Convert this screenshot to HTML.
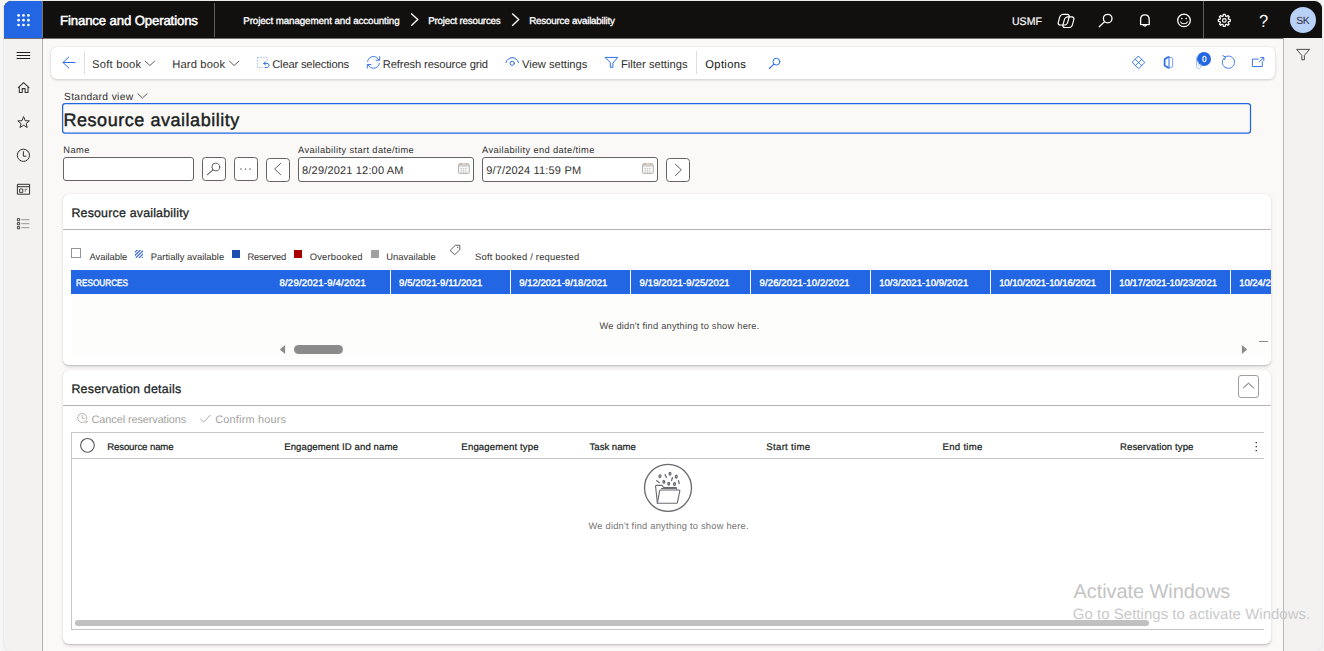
<!DOCTYPE html>
<html>
<head>
<meta charset="utf-8">
<title>Resource availability</title>
<style>
html,body{margin:0;padding:0;}
body{width:1324px;height:651px;overflow:hidden;background:#f6f6f6;font-family:"Liberation Sans",sans-serif;position:relative;}
.abs,.t,svg{position:absolute;}
.t{white-space:pre;display:block;text-rendering:geometricPrecision;}
svg{overflow:visible;}
#frame{left:4px;top:1px;width:1318px;height:650px;border-radius:7.5px 7.5px 7px 7px;overflow:hidden;background:#faf9f8;box-shadow:0 0 1.6px rgba(0,0,0,.22);}
#hdr{left:0;top:0;width:1318px;height:37px;background:#11100f;}
#hdrb{left:0;top:37px;width:1318px;height:1px;background:rgba(6,6,6,.55);}
#waffle{left:0;top:0;width:38px;height:37.5px;background:#2266e3;}
#side{left:0;top:37px;width:38px;height:613px;background:#f3f2f1;border-right:1px solid #b3b0ad;}
#sideb{left:38px;top:0;width:1px;height:37.5px;background:#7a7673;}
#rpane{left:1279px;top:37px;width:39px;height:613px;background:#f3f2f1;border-left:1px solid #bab8b6;}
#abar{left:51.2px;top:47.2px;width:1223.8px;height:31.6px;background:#fff;border-radius:6px;box-shadow:0 1px 3px rgba(0,0,0,.16),0 0 2px rgba(0,0,0,.08);}
.vline{width:1px;background:#e1dfdd;}
#title{left:62px;top:103px;width:1186.5px;height:28px;border:1.4px solid #2266e3;border-radius:3px;background:#faf9f8;}
.inp{border:1px solid #666462;border-radius:3px;background:#fff;}
.btn{width:21.8px;height:22px;border:1px solid #666462;border-radius:3.5px;background:#fff;}
.card{background:#fff;border-radius:6px;box-shadow:0 1.4px 3.2px rgba(0,0,0,.13),0 0.3px 1px rgba(0,0,0,.11);}
.hline{height:1px;background:#b7b4b1;}
.gh{top:270px;height:23.8px;background:#2266e3;}
.gd{top:270px;height:24px;width:1px;background:#fff;}
</style>
</head>
<body>
<div id="frame" class="abs">
 <div id="hdr" class="abs"></div>
 <div id="waffle" class="abs"></div>
 <div id="side" class="abs"></div>
 <div id="sideb" class="abs"></div>
 <div id="hdrb" class="abs"></div>
 <div id="rpane" class="abs"></div>
</div>

<!-- header dividers -->
<div class="abs" style="left:214px;top:3px;width:1px;height:34px;background:#605e5c"></div>
<div class="abs" style="left:1203px;top:1px;width:1px;height:37px;background:#605e5c"></div>
<!-- avatar -->
<div class="abs" style="left:1290px;top:7px;width:26px;height:26px;border-radius:50%;background:#b9d0f7"></div>

<!-- action bar -->
<div id="abar" class="abs"></div>
<div class="abs vline" style="left:84px;top:51px;height:23px"></div>
<div class="abs vline" style="left:695.5px;top:51px;height:23px"></div>
<!-- badge -->
<div class="abs" style="left:1196.95px;top:51.75px;width:14.1px;height:14.1px;border-radius:50%;background:#2266e3"></div>

<!-- title -->
<svg style="left:0;top:0" width="1324" height="140" viewBox="0 0 1324 140"><rect x="62.6" y="103.5" width="1187.9" height="29.7" rx="2.6" fill="#faf9f8" stroke="#2266e3" stroke-width="1.25"/></svg>

<!-- filter row -->
<div class="abs inp" style="left:63.2px;top:157.2px;width:128.6px;height:21.6px"></div>
<div class="abs btn" style="left:202px;top:157px"></div>
<div class="abs btn" style="left:234.1px;top:157px"></div>
<div class="abs btn" style="left:266.1px;top:158px"></div>
<div class="abs inp" style="left:298.1px;top:157.2px;width:173.5px;height:22.8px"></div>
<div class="abs inp" style="left:482.1px;top:157.2px;width:173.9px;height:22.8px"></div>
<div class="abs btn" style="left:666.2px;top:158px"></div>

<!-- card 1 -->
<div class="abs card" style="left:63px;top:194px;width:1208.2px;height:171px;overflow:hidden">
  <div class="abs hline" style="left:0;top:35px;width:1209px"></div>
  <div class="abs" style="left:8px;top:100px;width:1198.7px;height:62.8px;background:#fdfdfc"></div>
</div>
<div class="abs gh" style="left:71px;width:1200px"></div>
<div class="abs gd" style="left:390px"></div>
<div class="abs gd" style="left:510px"></div>
<div class="abs gd" style="left:630px"></div>
<div class="abs gd" style="left:750px"></div>
<div class="abs gd" style="left:870px"></div>
<div class="abs gd" style="left:990px"></div>
<div class="abs gd" style="left:1110px"></div>
<div class="abs gd" style="left:1230px"></div>
<!-- legend swatches -->
<div class="abs" style="left:71px;top:248px;width:8px;height:8px;border:1px solid #979593;background:#fff;box-sizing:content-box"></div>
<svg style="left:134.9px;top:250.2px;overflow:hidden" width="8" height="7.8" viewBox="0 0 8 7.8"><g stroke="#2f62d6" stroke-width="1.15"><path d="M-1 3.2L3.2 -1M-1 6.4L6.4 -1M0.8 7.8L8 0.6M4 8L9 3M7.2 8L9 6.2"/></g></svg>
<div class="abs" style="left:232.2px;top:250.2px;width:7.8px;height:7.8px;background:#1e4fb0"></div>
<div class="abs" style="left:294.3px;top:250.2px;width:7.8px;height:7.8px;background:#a80000"></div>
<div class="abs" style="left:371.3px;top:250.2px;width:7.8px;height:7.8px;background:#a0a0a0"></div>
<!-- grid1 scrollbar -->
<svg style="left:279px;top:344px" width="10" height="11" viewBox="279 344 10 11"><path d="M285.1 344.9V353.9L279.8 349.4Z" fill="#8b8b8b"/></svg>
<div class="abs" style="left:293.9px;top:344.9px;width:49.1px;height:9px;border-radius:4.5px;background:#8b8b8b"></div>
<svg style="left:1240px;top:344px" width="10" height="11" viewBox="1240 344 10 11"><path d="M1241.9 344.9V353.9L1247.2 349.4Z" fill="#8b8b8b"/></svg>
<div class="abs" style="left:1259px;top:341px;width:8.8px;height:1px;background:#8a8886"></div>

<!-- card 2 -->
<div class="abs card" style="left:63px;top:370px;width:1208.2px;height:274px;overflow:hidden">
  <div class="abs hline" style="left:0;top:35px;width:1209px"></div>
</div>
<div class="abs" style="left:1238.1px;top:375.2px;width:18.8px;height:21.3px;border:1px solid #a19f9d;border-radius:3px;background:#fff"></div>
<div class="abs" style="left:71px;top:432px;width:1192px;height:196.3px;border:1px solid #c8c6c4;border-right:none;box-sizing:content-box"></div>
<div class="abs" style="left:72px;top:458px;width:1192px;height:1px;background:#c8c6c4"></div>
<svg style="left:78px;top:436px" width="20" height="20" viewBox="78 436 20 20"><circle cx="87.45" cy="445.35" r="6.85" fill="#fff" stroke="#5c5a58" stroke-width="1.15"/></svg>
<div class="abs" style="left:75px;top:620px;width:1073.5px;height:6.2px;border-radius:3.1px;background:#c1c1c1"></div>

<!-- waffle -->
<svg style="left:16px;top:13px" width="16" height="16" viewBox="16 13 16 16"><g fill="#fff">
<circle cx="18.6" cy="15.4" r="1.35"/><circle cx="23.5" cy="15.4" r="1.35"/><circle cx="28.4" cy="15.4" r="1.35"/>
<circle cx="18.6" cy="20.2" r="1.35"/><circle cx="23.5" cy="20.2" r="1.35"/><circle cx="28.4" cy="20.2" r="1.35"/>
<circle cx="18.6" cy="25" r="1.35"/><circle cx="23.5" cy="25" r="1.35"/><circle cx="28.4" cy="25" r="1.35"/></g></svg>
<!-- sidebar icons -->
<svg style="left:0;top:0" width="44" height="240" viewBox="0 0 44 240" fill="none" stroke="#323130" stroke-width="1">
<path d="M16.6 52.5H30.2M16.6 55.5H30.2M16.6 58.5H30.2" stroke="#201f1e" stroke-width="1.05"/>
<path d="M18 87.8L23.6 82.6L29.3 87.8M19.3 86.8V92.4H22.2V88.6H25.1V92.4H28V86.8" stroke-width="1.05" stroke-linejoin="round"/>
<path d="M23.6 116.6L25.2 120.7L29.4 120.9L26.1 123.6L27.2 127.5L23.6 125.2L20 127.5L21.1 123.6L17.8 120.9L22 120.7Z" stroke-width="1" stroke-linejoin="miter"/>
<circle cx="23.4" cy="155.3" r="6.1" stroke-width="1"/><path d="M23.4 151.2V156.2H26.3" stroke-width="1"/>
<path d="M17.4 184.3H29.6V194.2H17.4ZM17.4 186.7H29.6" stroke-width="1"/><path d="M19.6 189H22.8V192.4H19.6Z" stroke-width="0.9"/><path d="M24.6 189.3H27.4M24.6 191H26" stroke-width="0.9" stroke="#605e5c"/>
<path d="M17.4 218.6H19.6V220.8H17.4ZM17.4 222.6H19.6V224.8H17.4ZM17.4 226.6H19.6V228.8H17.4Z" stroke-width="0.9"/><path d="M21.4 219.7H29.4M21.4 223.7H29.4M21.4 227.7H29.4" stroke="#8a8886" stroke-width="0.9"/>
</svg>
<!-- breadcrumb chevrons -->
<svg style="left:0;top:0" width="700" height="40" viewBox="0 0 700 40" fill="none" stroke="#fff" stroke-width="1.4">
<path d="M411.2 13.5L417.7 19.6L411.2 25.7"/><path d="M512.2 13.5L518.7 19.6L512.2 25.7"/></svg>
<!-- header right icons -->
<svg style="left:1050px;top:0" width="200" height="40" viewBox="1050 0 200 40" fill="none" stroke="#fff" stroke-width="1.3" stroke-linecap="round" stroke-linejoin="round">
<!-- copilot -->
<rect x="-4.7" y="-5.3" width="9.4" height="10.6" rx="2.6" transform="translate(1063.7 19.7) skewX(-15)" stroke-width="1.2"/>
<rect x="-4.7" y="-5.3" width="9.4" height="10.6" rx="2.6" transform="translate(1068.4 22.2) skewX(-15)" stroke-width="1.2"/>
<!-- search -->
<circle cx="1107.7" cy="18.6" r="4.3"/><path d="M1104.5 21.8L1099.2 26.8"/>
<!-- bell -->
<path d="M1140.6 24.6V19.6C1140.6 16.6 1142.4 14.8 1144.9 14.8C1147.400 14.8 1149.200 16.600 1149.200 19.600V24.600H1140.600Z"/><path d="M1143.6 25.2C1143.9 26.300 1145.900 26.300 1146.200 25.200" stroke-width="1.3"/>
<!-- smiley -->
<circle cx="1184" cy="20.4" r="6.3"/><circle cx="1181.800" cy="18.6" r="0.8" fill="#fff" stroke="none"/><circle cx="1186.200" cy="18.6" r="0.8" fill="#fff" stroke="none"/><path d="M1180.600 21.900C1181.600 24.400 1186.400 24.400 1187.400 21.900" stroke-width="1.1"/>
<!-- gear -->
<g transform="translate(1224.300 20.400) scale(0.9)"><circle r="2" stroke-width="1.35"/><path d="M-1.050 -6.600H1.050L1.400 -4.750L2.450 -4.300L4 -5.400L5.400 -4L4.300 -2.450L4.750 -1.400L6.600 -1.050V1.050L4.750 1.400L4.300 2.450L5.400 4L4 5.400L2.450 4.300L1.400 4.750L1.050 6.600H-1.050L-1.400 4.750L-2.450 4.300L-4 5.400L-5.400 4L-4.300 2.450L-4.750 1.400L-6.600 1.050V-1.050L-4.750 -1.400L-4.300 -2.450L-5.400 -4L-4 -5.400L-2.450 -4.300L-1.400 -4.750Z" stroke-width="1.4"/></g>
</svg>
<!-- right pane filter -->
<svg style="left:1290px;top:44px" width="26" height="22" viewBox="1290 44 26 22" fill="none" stroke="#3b3a39" stroke-width="0.9" stroke-linejoin="round"><path d="M1296.600 49.400H1309.600L1304.400 55.400V59.800H1301.800V55.400Z"/></svg>
<!-- action bar icons -->
<svg style="left:50px;top:46px" width="760" height="34" viewBox="50 46 760 34" fill="none" stroke="#2d6de5" stroke-width="0.92" stroke-linecap="round" stroke-linejoin="round">
<path d="M75.200 62.500H63M68.800 57L63 62.500L68.800 68" stroke-width="1"/>
<path d="M145.200 61.200L149.900 65.500L154.600 61.200" stroke="#605e5c" stroke-width="1"/>
<path d="M229.400 61.200L234.100 65.500L238.800 61.200" stroke="#605e5c" stroke-width="1"/>
<!-- clear selections -->
<path d="M257.400 57.300H267.200V61.500M257.400 57.300V67.500H262.500" stroke="#9db9f2" stroke-width="0.95" stroke-dasharray="1.6 1.3" stroke-linecap="butt"/>
<path d="M263.900 63.400H267C268.400 63.400 269 64.300 269 65.300C269 66.600 268 67.500 266.600 67.500H265.200M265.500 61.800L263.900 63.400L265.500 65" stroke-width="1"/>
<!-- refresh sync -->
<path d="M367.600 61.400C368 58.600 370.400 56.500 373.400 56.500C375.900 56.500 377.900 57.900 378.900 59.900M379.700 56.600V60.200H376.100"/>
<path d="M379.400 63.300C379 66.100 376.600 68.200 373.600 68.200C371.100 68.200 369.100 66.800 368.100 64.800M367.300 68.100V64.500H370.900"/>
<!-- eye -->
<path d="M505.900 62.600C506.900 59.500 509.400 57.700 512.200 57.700C515 57.700 517.500 59.500 518.500 62.600" stroke-width="1"/><circle cx="512.200" cy="63.300" r="2.100" stroke-width="1"/>
<!-- funnel -->
<path d="M605.500 57.400H617.700L612.900 63V67.300H610.300V63Z" stroke-width="1"/>
<!-- search -->
<circle cx="776.400" cy="61.700" r="3.400" stroke-width="1"/><path d="M773.900 64.200L769.400 68.500" stroke-width="1.1"/>
</svg>
<svg style="left:1125px;top:46px" width="150" height="34" viewBox="1125 46 150 34" fill="none" stroke="#2d6de5" stroke-width="0.92" stroke-linecap="round" stroke-linejoin="round">
<!-- diamond -->
<path d="M1138.600 56.300L1144.800 62.500L1138.600 68.700L1132.400 62.500Z"/><path d="M1135.500 59.400L1141.700 65.600M1141.700 59.400L1135.500 65.600" stroke-width="0.9"/>
<!-- office -->
<path d="M1168.7 56.7L1164.6 59.2V65.6L1168.7 68.1" stroke-width="1.7" stroke-linejoin="miter" stroke-linecap="butt"/>
<path d="M1169 56.4V68.4" stroke-width="1"/>
<path d="M1169.3 57.6H1171.6Q1172.7 57.6 1172.7 58.700V66.200Q1172.7 67.300 1171.600 67.300H1169.300" stroke-width="0.85" stroke="#5f8feb"/>
<!-- clip -->
<path d="M1196.500 57V66.600C1196.500 67.800 1197.500 68.500 1198.700 68.500C1199.900 68.500 1200.900 67.800 1200.900 66.600V64" stroke="#9db9f2" stroke-width="0.9"/>
<path d="M1198.300 62V66" stroke="#b9cdf6" stroke-width="0.8"/>
<!-- refresh -->
<path d="M1225.100 57C1226.100 56.400 1227.200 56.100 1228.400 56.100C1231.800 56.100 1234.500 58.800 1234.500 62.200C1234.500 65.600 1231.800 68.300 1228.400 68.300C1225 68.300 1222.300 65.600 1222.300 62.200C1222.300 60.800 1222.800 59.500 1223.500 58.500"/><path d="M1222.900 55.700L1225.600 57L1224.400 59.600" stroke-width="0.95"/>
<!-- popout -->
<path d="M1258.300 59.100H1252.400V66.500H1262.300V61.800"/><path d="M1259.300 61.800L1263.700 57.700M1260.600 57.600H1263.800V60.800"/>
</svg>
<!-- std view chevron -->
<svg style="left:136px;top:90px" width="14" height="12" viewBox="136 90 14 12" fill="none" stroke="#605e5c" stroke-width="1" stroke-linecap="round" stroke-linejoin="round"><path d="M137.900 93.700L142.500 98L147.100 93.700"/></svg>
<!-- filter row icons -->
<svg style="left:196px;top:152px" width="500" height="36" viewBox="196 152 500 36" fill="none" stroke="#605e5c" stroke-width="1" stroke-linecap="round" stroke-linejoin="round">
<circle cx="215.800" cy="167" r="3.900"/><path d="M212.900 169.800L207.500 174.600" stroke-width="1.1"/>
<g fill="#605e5c" stroke="none"><rect x="240.300" y="168.400" width="1.300" height="1.300"/><rect x="244.850" y="168.400" width="1.300" height="1.300"/><rect x="249.400" y="168.400" width="1.300" height="1.300"/></g>
<path d="M280.600 163.400L274.600 169L280.600 174.700"/>
<path d="M675.400 164.300L681.400 169.900L675.400 175.600"/>
<!-- calendars -->
<g stroke="#a3a19f" stroke-width="0.9"><rect x="458.6" y="164" width="10.6" height="9.3" rx="0.9" fill="#fff"/><path d="M459.05 165.6H468.75" stroke-width="2.2" stroke="#d0cecc" stroke-linecap="butt"/><path d="M461.1 163.1V164.7M466.7 163.1V164.7" stroke="#c9a777" stroke-width="1.1" stroke-linecap="butt"/><path d="M460.6 168.4H467.2M460.6 170.2H467.2M460.6 172H467.2" stroke="#b1afad" stroke-width="0.9" stroke-dasharray="1.4 0.9" stroke-linecap="butt"/></g>
<g stroke="#a3a19f" stroke-width="0.9"><rect x="642.6" y="164" width="10.6" height="9.3" rx="0.9" fill="#fff"/><path d="M643.05 165.6H652.75" stroke-width="2.2" stroke="#d0cecc" stroke-linecap="butt"/><path d="M645.1 163.1V164.7M650.7 163.1V164.7" stroke="#c9a777" stroke-width="1.1" stroke-linecap="butt"/><path d="M644.6 168.4H651.2M644.6 170.2H651.2M644.6 172H651.2" stroke="#b1afad" stroke-width="0.9" stroke-dasharray="1.4 0.9" stroke-linecap="butt"/></g>
</svg>
<!-- tag -->
<svg style="left:446px;top:242px" width="18" height="16" viewBox="446 242 18 16" fill="none" stroke="#484644" stroke-width="0.85" stroke-linejoin="round"><path d="M455.400 245.300H459.800V249.800L454.600 254.700L450.100 250.500Z"/><circle cx="457.700" cy="247.400" r="0.550" fill="#484644" stroke="none"/></svg>
<!-- collapse chevron -->
<svg style="left:1238px;top:376px" width="22" height="22" viewBox="1238 376 22 22" fill="none" stroke="#484644" stroke-width="0.9" stroke-linecap="round" stroke-linejoin="round"><path d="M1243.500 387.800L1248.500 383.200L1253.500 387.800"/></svg>
<!-- cancel + check -->
<svg style="left:74px;top:408px" width="150" height="22" viewBox="74 408 150 22" fill="none" stroke="#b3b0ad" stroke-width="0.95" stroke-linecap="round" stroke-linejoin="round">
<path d="M83.600 422.300C83.200 422.400 82.700 422.500 82.200 422.500C79.700 422.500 77.700 420.500 77.700 418C77.700 415.500 79.700 413.500 82.200 413.500C84.700 413.500 86.700 415.500 86.700 418C86.700 418.500 86.600 418.900 86.500 419.300"/><path d="M82.200 415.400V418.300H84.300"/><path d="M84.400 421.800H87.200M86.100 420.600L87.300 421.800L86.100 423"/>
<path d="M200.600 419.100L203.600 422L210.300 415.300" stroke="#a19f9d"/>
</svg>
<!-- more (vertical dots) -->
<svg style="left:1252px;top:438px" width="10" height="18" viewBox="1252 438 10 18"><g fill="#323130"><rect x="1255.600" y="442" width="1.300" height="1.300"/><rect x="1255.600" y="446" width="1.300" height="1.300"/><rect x="1255.600" y="450" width="1.300" height="1.300"/></g></svg>
<!-- empty state icon -->
<svg style="left:640px;top:460px" width="56" height="56" viewBox="640 460 56 56" fill="none" stroke="#6b6970" stroke-width="1.15" stroke-linecap="round" stroke-linejoin="round">
<circle cx="668" cy="487.800" r="23.500" stroke-width="1.300"/>
<path d="M657.400 503.200L655.600 486.500C655.500 485.800 655.900 485.400 656.600 485.400H662L663.600 487.500H676.300V490"/>
<path d="M657.400 503.200L659.600 490.800C659.700 490.300 660 490 660.500 490H679C679.600 490 679.900 490.400 679.800 491L677.500 502.400C677.400 502.900 677 503.200 676.500 503.200Z" fill="#fff"/>
<path d="M661.500 488.500H675.500" stroke-width="1.200" stroke-dasharray="1.200 0.900"/>
<g stroke-width="1.300">
<ellipse cx="660" cy="476.200" rx="0.900" ry="1.300" transform="rotate(25 660 476.200)"/>
<path d="M665.100 474.700L666.400 477.400"/>
<ellipse cx="670" cy="473.700" rx="0.900" ry="1.400"/>
<ellipse cx="676.300" cy="476.600" rx="0.900" ry="1.400" transform="rotate(20 676.300 476.600)"/>
<path d="M672.400 477.700L671.500 480.600"/>
<path d="M656.700 480.700L659.200 482.600"/>
<ellipse cx="663.800" cy="481.800" rx="0.900" ry="1.300" transform="rotate(-15 663.800 481.800)"/>
<ellipse cx="668.700" cy="483.800" rx="0.900" ry="1.300"/>
<ellipse cx="674.500" cy="484" rx="0.900" ry="1.300" transform="rotate(15 674.500 484)"/>
<path d="M678.400 480.700L679.300 483.500"/>
</g>
</svg>


<span class="t" style="left:60.04px;top:12.51px;font-size:13.2px;line-height:15.84px;font-weight:400;color:#ffffff;letter-spacing:-0.136px;-webkit-text-stroke:0.5px #ffffff;">Finance and Operations</span>
<span class="t" style="left:243.22px;top:15.72px;font-size:9.8px;line-height:11.76px;font-weight:400;color:#ffffff;letter-spacing:-0.099px;-webkit-text-stroke:0.32px #ffffff;">Project management and accounting</span>
<span class="t" style="left:428.22px;top:15.72px;font-size:9.8px;line-height:11.76px;font-weight:400;color:#ffffff;letter-spacing:-0.236px;-webkit-text-stroke:0.32px #ffffff;">Project resources</span>
<span class="t" style="left:529.22px;top:15.72px;font-size:9.8px;line-height:11.76px;font-weight:400;color:#ffffff;letter-spacing:-0.208px;-webkit-text-stroke:0.32px #ffffff;">Resource availability</span>
<span class="t" style="left:1012.31px;top:16.49px;font-size:11.1px;line-height:13.32px;font-weight:400;color:#ffffff;transform:scaleX(0.9499);transform-origin:0 0;-webkit-text-stroke:0.2px #ffffff;">USMF</span>
<span class="t" style="left:1258.81px;top:11.34px;font-size:17.6px;line-height:21.12px;font-weight:400;color:#ffffff;transform:scaleX(0.9363);transform-origin:0 0;">?</span>
<span class="t" style="left:1296.15px;top:16.16px;font-size:10.4px;line-height:12.48px;font-weight:400;color:#2b2b40;letter-spacing:-0.264px;">SK</span>
<span class="t" style="left:92.07px;top:59.40px;font-size:11.2px;line-height:13.44px;font-weight:400;color:#323130;letter-spacing:0.224px;">Soft book</span>
<span class="t" style="left:172.16px;top:59.40px;font-size:11.2px;line-height:13.44px;font-weight:400;color:#323130;letter-spacing:0.157px;">Hard book</span>
<span class="t" style="left:272.22px;top:59.40px;font-size:11.2px;line-height:13.44px;font-weight:400;color:#323130;letter-spacing:-0.183px;">Clear selections</span>
<span class="t" style="left:382.74px;top:59.40px;font-size:11.2px;line-height:13.44px;font-weight:400;color:#323130;letter-spacing:-0.114px;">Refresh resource grid</span>
<span class="t" style="left:521.98px;top:59.40px;font-size:11.2px;line-height:13.44px;font-weight:400;color:#323130;letter-spacing:-0.028px;">View settings</span>
<span class="t" style="left:620.92px;top:59.40px;font-size:11.2px;line-height:13.44px;font-weight:400;color:#323130;letter-spacing:0.005px;">Filter settings</span>
<span class="t" style="left:705.30px;top:59.40px;font-size:11.2px;line-height:13.44px;font-weight:400;color:#201f1e;letter-spacing:0.332px;-webkit-text-stroke:0.08px #201f1e;">Options</span>
<span class="t" style="left:1202.01px;top:53.77px;font-size:8.7px;line-height:10.44px;font-weight:400;color:#ffffff;transform:scaleX(0.9284);transform-origin:0 0;-webkit-text-stroke:0.25px #ffffff;">0</span>
<span class="t" style="left:63.96px;top:92.25px;font-size:10.3px;line-height:12.36px;font-weight:400;color:#323130;letter-spacing:0.336px;">Standard view</span>
<span class="t" style="left:63.51px;top:109.96px;font-size:18.0px;line-height:21.6px;font-weight:400;color:#201f1e;letter-spacing:0.538px;-webkit-text-stroke:0.45px #201f1e;">Resource availability</span>
<span class="t" style="left:63.27px;top:145.20px;font-size:9.3px;line-height:11.16px;font-weight:400;color:#323130;letter-spacing:0.417px;">Name</span>
<span class="t" style="left:298.09px;top:145.20px;font-size:9.3px;line-height:11.16px;font-weight:400;color:#323130;letter-spacing:0.384px;">Availability start date/time</span>
<span class="t" style="left:482.12px;top:145.20px;font-size:9.3px;line-height:11.16px;font-weight:400;color:#323130;letter-spacing:0.381px;">Availability end date/time</span>
<span class="t" style="left:302.09px;top:164.59px;font-size:11.0px;line-height:13.2px;font-weight:400;color:#323130;letter-spacing:0.173px;">8/29/2021 12:00 AM</span>
<span class="t" style="left:486.21px;top:164.59px;font-size:11.0px;line-height:13.2px;font-weight:400;color:#323130;letter-spacing:0.169px;">9/7/2024 11:59 PM</span>
<span class="t" style="left:71.40px;top:206.26px;font-size:12.4px;line-height:14.88px;font-weight:400;color:#201f1e;letter-spacing:0.198px;-webkit-text-stroke:0.28px #201f1e;">Resource availability</span>
<span class="t" style="left:89.52px;top:251.10px;font-size:9.4px;line-height:11.28px;font-weight:400;color:#323130;letter-spacing:-0.017px;">Available</span>
<span class="t" style="left:150.84px;top:251.10px;font-size:9.4px;line-height:11.28px;font-weight:400;color:#323130;letter-spacing:0.021px;">Partially available</span>
<span class="t" style="left:247.50px;top:251.10px;font-size:9.4px;line-height:11.28px;font-weight:400;color:#323130;letter-spacing:-0.200px;">Reserved</span>
<span class="t" style="left:309.69px;top:251.10px;font-size:9.4px;line-height:11.28px;font-weight:400;color:#323130;letter-spacing:0.202px;">Overbooked</span>
<span class="t" style="left:386.13px;top:251.10px;font-size:9.4px;line-height:11.28px;font-weight:400;color:#323130;letter-spacing:0.056px;">Unavailable</span>
<span class="t" style="left:475.07px;top:251.10px;font-size:9.4px;line-height:11.28px;font-weight:400;color:#323130;letter-spacing:0.206px;">Soft booked / requested</span>
<span class="t" style="left:75.54px;top:277.10px;font-size:9.4px;line-height:11.28px;font-weight:400;color:#ffffff;transform:scaleX(0.8770);transform-origin:0 0;-webkit-text-stroke:0.4px #ffffff;">RESOURCES</span>
<span class="t" style="left:279.49px;top:278.01px;font-size:9.5px;line-height:11.4px;font-weight:400;color:#ffffff;letter-spacing:0.229px;-webkit-text-stroke:0.4px #ffffff;">8/29/2021-9/4/2021</span>
<span class="t" style="left:399.06px;top:278.01px;font-size:9.5px;line-height:11.4px;font-weight:400;color:#ffffff;letter-spacing:0.095px;-webkit-text-stroke:0.4px #ffffff;">9/5/2021-9/11/2021</span>
<span class="t" style="left:519.26px;top:278.01px;font-size:9.5px;line-height:11.4px;font-weight:400;color:#ffffff;letter-spacing:0.018px;-webkit-text-stroke:0.4px #ffffff;">9/12/2021-9/18/2021</span>
<span class="t" style="left:639.52px;top:278.01px;font-size:9.5px;line-height:11.4px;font-weight:400;color:#ffffff;letter-spacing:0.136px;-webkit-text-stroke:0.4px #ffffff;">9/19/2021-9/25/2021</span>
<span class="t" style="left:759.52px;top:278.01px;font-size:9.5px;line-height:11.4px;font-weight:400;color:#ffffff;letter-spacing:0.136px;-webkit-text-stroke:0.4px #ffffff;">9/26/2021-10/2/2021</span>
<span class="t" style="left:879.13px;top:278.01px;font-size:9.5px;line-height:11.4px;font-weight:400;color:#ffffff;letter-spacing:0.075px;-webkit-text-stroke:0.4px #ffffff;">10/3/2021-10/9/2021</span>
<span class="t" style="left:999.13px;top:278.01px;font-size:9.5px;line-height:11.4px;font-weight:400;color:#ffffff;letter-spacing:-0.063px;-webkit-text-stroke:0.4px #ffffff;">10/10/2021-10/16/2021</span>
<span class="t" style="left:1119.13px;top:278.01px;font-size:9.5px;line-height:11.4px;font-weight:400;color:#ffffff;letter-spacing:-0.023px;-webkit-text-stroke:0.4px #ffffff;">10/17/2021-10/23/2021</span>
<div class="abs" style="left:0;top:0;width:1271.2px;height:300px;overflow:hidden"><span class="t" style="left:1239.13px;top:278.01px;font-size:9.5px;line-height:11.4px;font-weight:400;color:#ffffff;letter-spacing:-0.023px;-webkit-text-stroke:0.4px #ffffff;">10/24/2021-10/30/2021</span></div>
<span class="t" style="left:599.38px;top:321.20px;font-size:9.3px;line-height:11.16px;font-weight:400;color:#484644;letter-spacing:0.221px;">We didn't find anything to show here.</span>
<span class="t" style="left:71.40px;top:382.26px;font-size:12.4px;line-height:14.88px;font-weight:400;color:#201f1e;letter-spacing:0.242px;-webkit-text-stroke:0.28px #201f1e;">Reservation details</span>
<span class="t" style="left:91.60px;top:413.68px;font-size:10.9px;line-height:13.08px;font-weight:400;color:#a19f9d;letter-spacing:-0.088px;">Cancel reservations</span>
<span class="t" style="left:215.20px;top:413.68px;font-size:10.9px;line-height:13.08px;font-weight:400;color:#a19f9d;letter-spacing:0.207px;">Confirm hours</span>
<span class="t" style="left:107.16px;top:441.91px;font-size:9.6px;line-height:11.52px;font-weight:400;color:#201f1e;letter-spacing:-0.108px;-webkit-text-stroke:0.22px #201f1e;">Resource name</span>
<span class="t" style="left:284.17px;top:441.91px;font-size:9.6px;line-height:11.52px;font-weight:400;color:#201f1e;letter-spacing:0.080px;-webkit-text-stroke:0.22px #201f1e;">Engagement ID and name</span>
<span class="t" style="left:461.36px;top:441.91px;font-size:9.6px;line-height:11.52px;font-weight:400;color:#201f1e;letter-spacing:0.143px;-webkit-text-stroke:0.22px #201f1e;">Engagement type</span>
<span class="t" style="left:589.55px;top:441.91px;font-size:9.6px;line-height:11.52px;font-weight:400;color:#201f1e;letter-spacing:-0.021px;-webkit-text-stroke:0.22px #201f1e;">Task name</span>
<span class="t" style="left:766.36px;top:441.91px;font-size:9.6px;line-height:11.52px;font-weight:400;color:#201f1e;letter-spacing:0.289px;-webkit-text-stroke:0.22px #201f1e;">Start time</span>
<span class="t" style="left:942.59px;top:441.91px;font-size:9.6px;line-height:11.52px;font-weight:400;color:#201f1e;letter-spacing:0.275px;-webkit-text-stroke:0.22px #201f1e;">End time</span>
<span class="t" style="left:1119.97px;top:441.91px;font-size:9.6px;line-height:11.52px;font-weight:400;color:#201f1e;letter-spacing:0.099px;-webkit-text-stroke:0.22px #201f1e;">Reservation type</span>
<span class="t" style="left:588.49px;top:521.20px;font-size:9.3px;line-height:11.16px;font-weight:400;color:#767472;letter-spacing:0.222px;">We didn't find anything to show here.</span>
<span class="t" style="left:1073.46px;top:580.07px;font-size:20.0px;line-height:24.0px;font-weight:400;color:#c4c4c4;letter-spacing:-0.068px;">Activate Windows</span>
<span class="t" style="left:1072.85px;top:606.90px;font-size:14.9px;line-height:17.88px;font-weight:400;color:#c9c9c9;letter-spacing:0.067px;">Go to Settings to activate Windows.</span>
</body>
</html>
